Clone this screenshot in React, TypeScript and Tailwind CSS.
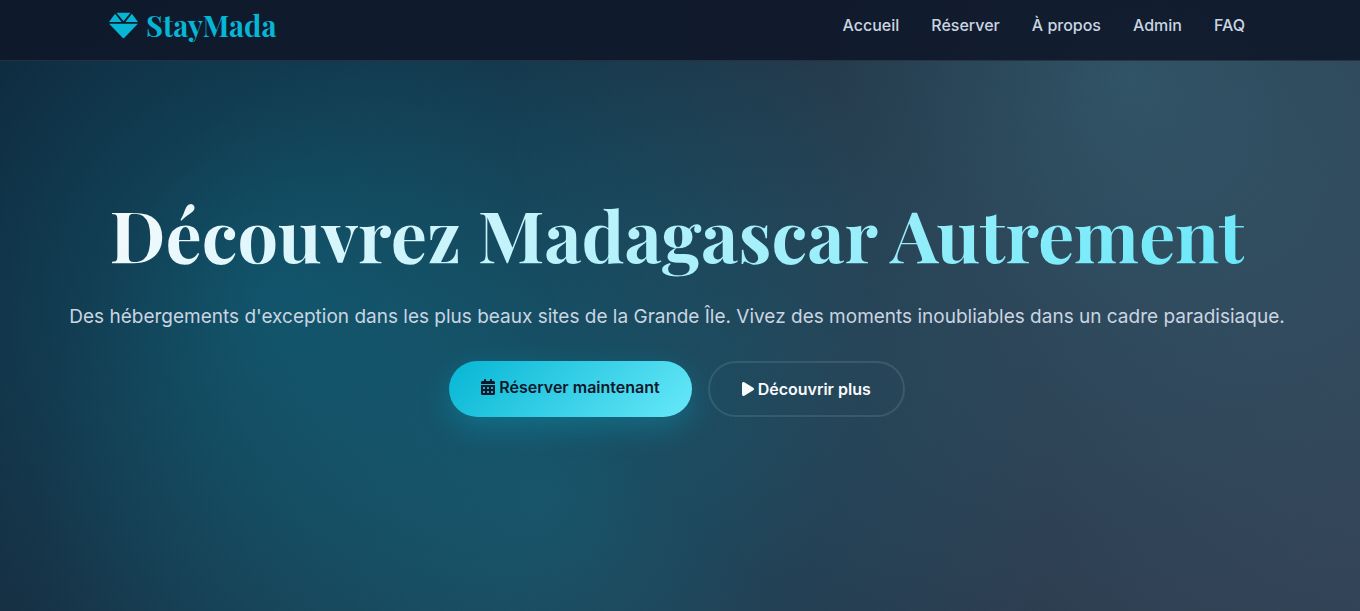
import { FaCalendarDays, FaPlay } from "react-icons/fa6";

const LINKS = [
  { label: "Accueil", href: "#accueil" },
  { label: "Réserver", href: "#reserver" },
  { label: "À propos", href: "#a-propos" },
  { label: "Admin", href: "#admin" },
  { label: "FAQ", href: "#faq" },
];

function GemIcon() {
  return (
    <svg viewBox="0 0 512 512" className="size-[29px]" fill="currentColor" aria-hidden="true">
      <path d="M378.7 32H133.3L256 182.7L378.7 32z" />
      <path d="M512 192l-107.4-141.3L289.6 192H512z" />
      <path d="M107.4 50.67L0 192h222.4L107.4 50.67z" />
      <path d="M244.3 474.9C247.3 478.2 251.6 480 256 480s8.653-1.828 11.67-5.062L510.6 224H1.365L244.3 474.9z" />
    </svg>
  );
}

function Navbar() {
  return (
    <header className="h-[61px] border-b border-white/10 bg-[#0f172a]/90 pr-1.5">
      <div className="mx-auto flex h-[51px] max-w-[1200px] items-center justify-between px-8">
        <a href="#accueil" className="flex items-center gap-2 font-['Playfair_Display','Liberation_Serif',serif] text-[29px] font-bold text-[#06b6d4]">
          <GemIcon />
          <span>StayMada</span>
        </a>
        <nav className="flex gap-8 pb-0.5">
          {LINKS.map(l => (
            <a key={l.label} href={l.href} className="font-medium text-slate-300 hover:text-cyan-400">
              {l.label}
            </a>
          ))}
        </nav>
      </div>
    </header>
  );
}

function Hero() {
  return (
    <main className="flex flex-1 flex-col items-center justify-center pr-[38px] pb-[70px] pl-8 text-center">
      <h1 className="mb-5 bg-linear-135/srgb from-[#f8fafc] to-[#67e8f9] bg-clip-text font-['Playfair_Display','Liberation_Serif',serif] text-[72px] leading-[96px] font-bold text-transparent">
        Découvrez Madagascar Autrement
      </h1>
      <p className="mb-7 text-[19px] leading-8 text-slate-300">
        Des hébergements d'exception dans les plus beaux sites de la Grande Île. Vivez des moments inoubliables dans un cadre paradisiaque.
      </p>
      <div className="flex gap-4">
        <button className="flex h-14 items-center gap-1 rounded-full bg-linear-135/srgb from-[#06b6d4] to-[#67e8f9] px-8 pb-1 font-semibold text-slate-900 shadow-[0_10px_30px_rgba(6,182,212,0.3)]">
          <FaCalendarDays className="h-4 w-3.5" />
          Réserver maintenant
        </button>
        <button className="flex h-14 items-center gap-1 rounded-full border-2 border-white/10 px-8 font-semibold text-slate-50">
          <FaPlay className="h-4 w-3" />
          Découvrir plus
        </button>
      </div>
    </main>
  );
}

export default function App() {
  return (
    <div className="flex min-h-screen flex-col bg-[radial-gradient(circle_at_20%_48%,rgba(6,182,212,0.3)_0%,transparent_53%),radial-gradient(circle_at_83%_13%,rgba(103,232,249,0.2)_0%,transparent_50%),radial-gradient(circle_at_40%_82%,rgba(6,182,212,0.2)_0%,transparent_53%),linear-gradient(135deg,#0f172a_0%,#1e293b_50%,#334155_100%)] font-['Inter',sans-serif]">
      <Navbar />
      <Hero />
    </div>
  );
}
